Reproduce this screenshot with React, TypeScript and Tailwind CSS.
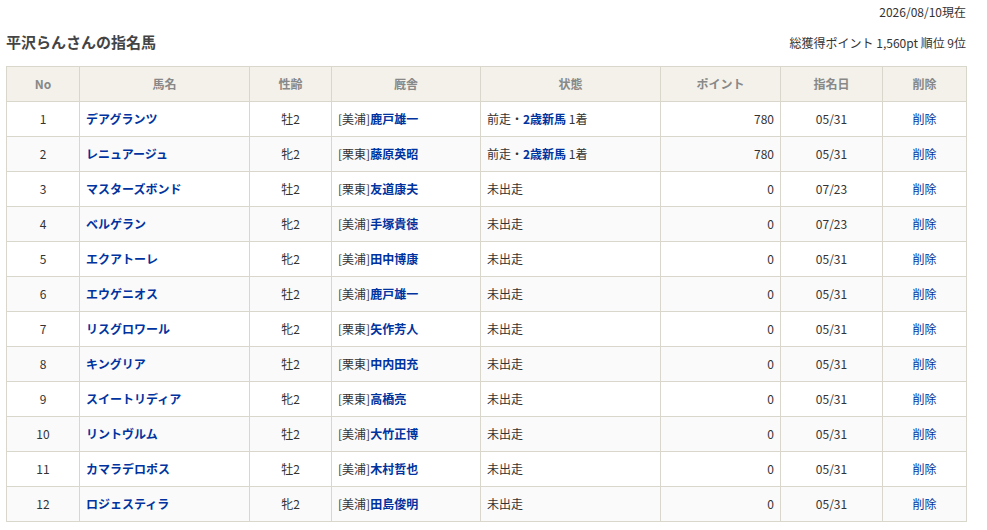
const rows: [string, string, string, string, string, boolean, string, string][] = [
  ["1", "デアグランツ", "牡2", "美浦", "鹿戸雄一", true, "780", "05/31"],
  ["2", "レニュアージュ", "牝2", "栗東", "藤原英昭", true, "780", "05/31"],
  ["3", "マスターズボンド", "牡2", "栗東", "友道康夫", false, "0", "07/23"],
  ["4", "ベルゲラン", "牝2", "美浦", "手塚貴徳", false, "0", "07/23"],
  ["5", "エクアトーレ", "牝2", "美浦", "田中博康", false, "0", "05/31"],
  ["6", "エウゲニオス", "牡2", "美浦", "鹿戸雄一", false, "0", "05/31"],
  ["7", "リスグロワール", "牝2", "栗東", "矢作芳人", false, "0", "05/31"],
  ["8", "キングリア", "牡2", "栗東", "中内田充", false, "0", "05/31"],
  ["9", "スイートリディア", "牝2", "栗東", "高橋亮", false, "0", "05/31"],
  ["10", "リントヴルム", "牡2", "美浦", "大竹正博", false, "0", "05/31"],
  ["11", "カマラデロポス", "牡2", "美浦", "木村哲也", false, "0", "05/31"],
  ["12", "ロジェスティラ", "牝2", "美浦", "田島俊明", false, "0", "05/31"],
];

const th = "border border-[#d9d6cb] font-bold text-[#888] h-[35px]";
const td = "border border-[#d9d6cb] h-[35px] px-[6px]";

export default function App() {
  return (
    <div
      className="w-[987px] h-[530px] bg-white text-[12px] text-[#333] overflow-hidden"
      style={{ fontFamily: '"Noto Sans CJK JP", "Noto Sans", sans-serif' }}
    >
      <div className="w-[960px] ml-[6px]">
        <div className="text-right pt-[3px] h-[20px] leading-[18px]">2026/08/10現在</div>
        <div className="flex justify-between items-end mt-[12px] mb-[14px]">
          <h1 className="text-[15px] font-bold text-[#444] leading-[20px]">平沢らんさんの指名馬</h1>
          <div className="leading-[18px]">総獲得ポイント 1,560pt 順位 9位</div>
        </div>
        <table className="w-full border-collapse table-fixed">
          <colgroup>
            <col className="w-[73px]" />
            <col className="w-[170px]" />
            <col className="w-[82px]" />
            <col className="w-[149px]" />
            <col className="w-[180px]" />
            <col className="w-[120px]" />
            <col className="w-[102px]" />
            <col className="w-[84px]" />
          </colgroup>
          <thead>
            <tr className="bg-[#f3f1ea]">
              {["No", "馬名", "性齢", "厩舎", "状態", "ポイント", "指名日", "削除"].map((h) => (
                <th key={h} className={th}>{h}</th>
              ))}
            </tr>
          </thead>
          <tbody>
            {rows.map(([no, name, sex, area, trainer, ran, pt, date], i) => (
              <tr key={no} className={i % 2 ? "bg-[#fafafa]" : "bg-white"}>
                <td className={td + " text-center"}>{no}</td>
                <td className={td + " font-bold text-[#0033a0]"}>{name}</td>
                <td className={td + " text-center"}>{sex}</td>
                <td className={td}>
                  [{area}]<span className="font-bold text-[#0033a0]">{trainer}</span>
                </td>
                <td className={td}>
                  {ran ? (
                    <>前走・<span className="font-bold text-[#0033a0]">2歳新馬</span> 1着</>
                  ) : (
                    "未出走"
                  )}
                </td>
                <td className={td + " text-right"}>{pt}</td>
                <td className={td + " text-center"}>{date}</td>
                <td className={td + " text-center text-[#0033a0]"}>削除</td>
              </tr>
            ))}
          </tbody>
        </table>
      </div>
    </div>
  );
}
